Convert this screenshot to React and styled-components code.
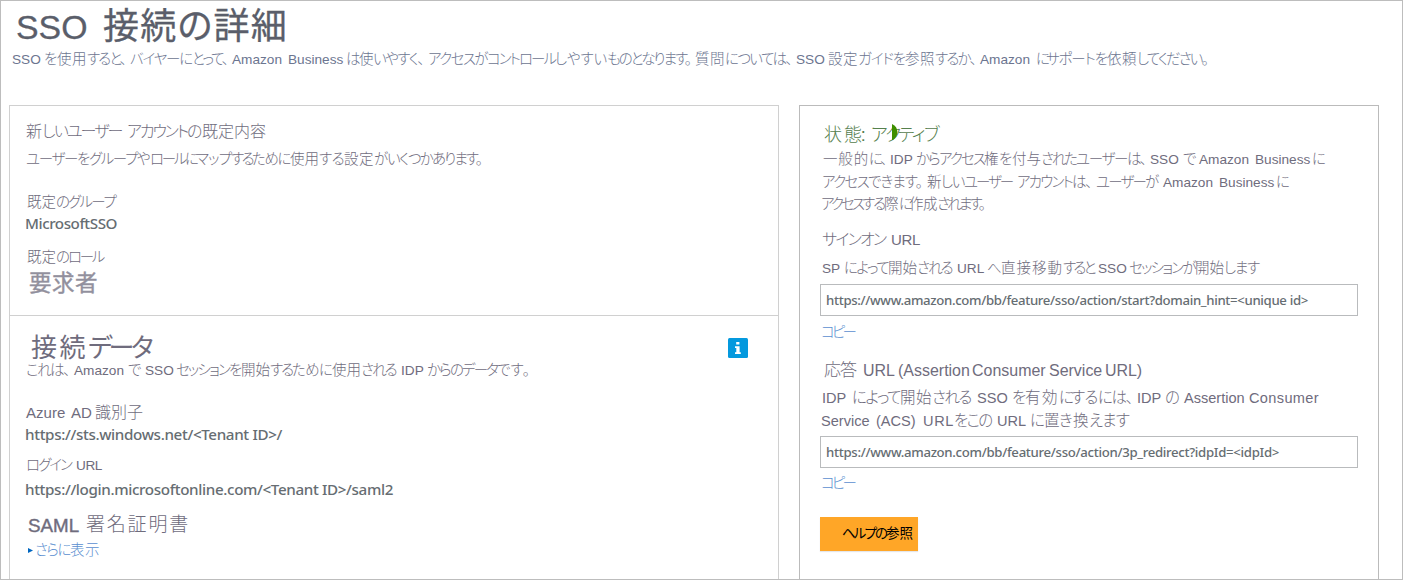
import React, { useLayoutEffect, useRef, useState } from "react";
import styled, { createGlobalStyle } from "styled-components";

const GlobalStyle = createGlobalStyle`
  * { box-sizing: border-box; }
  body {
    margin: 0;
    background: #fff;
    font-family: "Liberation Sans", "Noto Sans CJK JP", sans-serif;
    font-weight: 300;
    color: #6f6c7d;
  }
`;

const Page = styled.div`
  width: 1403px;
  height: 580px;
  overflow: hidden;
  display: flex;
  flex-direction: column;
  border: 1px solid #bdbdbd;
`;

const Header = styled.header`
  flex: none;
  height: 104px;
  padding-top: 2px;
`;

const Columns = styled.main`
  display: flex;
  gap: 20px;
  padding-left: 8px;
  flex: 1;
`;

const Card = styled.section`
  width: ${(p) => p.$width}px;
  height: 475px;
  border: 1px solid ${(p) => p.$border};
  border-bottom: 0;
`;

const CardSection = styled.div`
  padding: ${(p) => p.$top}px 0 0 15px;
  height: ${(p) => (p.$height ? `${p.$height}px` : "auto")};
  border-bottom: ${(p) => (p.$divided ? "1px solid #d0d0d0" : "0")};
`;

const Line = styled.div`
  display: flex;
  align-items: center;
  height: ${(p) => p.$height || 22}px;
  margin: ${(p) => p.$gap || 0}px 0 0;
  padding-top: ${(p) => p.$drop || 0}px;
  padding-left: ${(p) => p.$indent || 0}px;
  font-size: ${(p) => p.$size || 14.5}px;
  line-height: ${(p) => (p.$height || 22) - (p.$drop || 0)}px;
  color: ${(p) => p.$color || "inherit"};
  font-weight: ${(p) => p.$weight || 300};
  -webkit-text-stroke: ${(p) => p.$stroke || 0}px currentColor;
`;

const Slot = styled.span`
  flex: none;
  width: ${(p) => p.$width}px;
  white-space: pre;
  font-feature-settings: "palt";
`;

const Glyphs = styled.span`
  font-size: ${(p) => (p.$latin ? "0.94em" : "1em")};
`;

const Ember = styled.span`
  display: inline-block;
  margin-bottom: ${(p) => p.$lift || 0}px;
  font-family: "Noto Sans", "Open Sans", sans-serif;
  font-weight: 500;
  font-size: ${(p) => p.$size}px;
  color: #666d72;
`;

const UrlBox = styled.div`
  width: 538px;
  height: 32px;
  margin: ${(p) => p.$gap}px 0 0 5px;
  padding-left: 5px;
  display: flex;
  align-items: center;
  border: 1px solid #b9bbbd;
  white-space: pre;
`;

const CopyLink = styled(Line)`
  color: #5b8fd0;
`;

const TitleRow = styled.div`
  display: flex;
  justify-content: space-between;
  padding-right: 30px;
`;

const InfoBadge = styled.svg`
  width: 20px;
  height: 20px;
  margin-top: 7px;
`;

const Triangle = styled.svg`
  width: 5px;
  height: 5px;
  margin-right: 2px;
`;

const StatusWord = styled.div`
  position: relative;
`;

const Leaf = styled.svg`
  position: absolute;
  left: 76px;
  top: 2px;
  width: 7px;
  height: 18px;
`;

const HelpButton = styled.button`
  display: block;
  width: 98px;
  height: 34px;
  margin: 25px 0 0 5px;
  padding: 0 0 2px 22px;
  border: 0;
  background: #ffa627;
  box-shadow: 0 1px 1px #e4e6ea;
  color: #111;
  font-family: "Liberation Sans", "Noto Sans CJK JP", sans-serif;
  text-align: left;
`;

// Spreads a run over the given width: through its spaces for Latin words,
// through its letters otherwise.
function Run({ text, width, plain }) {
  const ref = useRef(null);
  const [style, setStyle] = useState({});
  const latin = !plain && /^[A-Za-z(]/.test(text) && !/[^\x00-\x7f]/.test(text);
  useLayoutEffect(() => {
    const natural = ref.current.getBoundingClientRect().width;
    if (latin && text.endsWith(" ")) {
      setStyle({ wordSpacing: `${width - natural}px` });
      return;
    }
    const reserve = /[、。]$/.test(text) ? 5 : text.endsWith(" ") ? 3 : 0;
    setStyle({ letterSpacing: `${(width - reserve - natural) / Array.from(text).length}px` });
  }, [text, width, latin]);
  return (
    <Slot $width={width}>
      <Glyphs ref={ref} $latin={latin} style={style}>{text}</Glyphs>
    </Slot>
  );
}

const Runs = ({ items }) => items.map(([text, width], i) => <Run key={i} text={text} width={width} />);

const EmberRun = ({ text, width, size = 15.2, lift = 2 }) => (
  <Ember $size={size} $lift={lift}><Run plain text={text} width={width} /></Ember>
);

export default function App() {
  return (
    <>
      <GlobalStyle />
      <Page>
        <Header>
          <Line as="h1" $height={44} $drop={4} $size={36} $indent={15} $color="#5a5e6a" $stroke={0.3} $weight={400}>
            <Runs items={[["SSO ", 87], ["接続の詳細", 185]]} />
          </Line>
          <Line $height={22} $gap={1} $indent={11} $color="#6c7590">
            <Runs items={[
              ["SSO ", 32], ["を", 13], ["使用", 30], ["すると、", 43], ["バイヤーに", 62], ["とって、", 40],
              ["Amazon ", 56], ["Business ", 58], ["は", 13], ["使", 14], ["いやすく、", 55], ["アクセスが", 59],
              ["コントロール", 68], ["しやすい", 52], ["ものとなります。", 88], ["質問", 30], ["については、", 71],
              ["SSO ", 32], ["設定", 30], ["ガイドを", 47], ["参照", 30], ["するか、", 45], ["Amazon ", 56],
              ["に", 10], ["サポートを", 61], ["依頼", 30], ["してください。", 75],
            ]} />
          </Line>
        </Header>
        <Columns>
          <Card $width={770} $border="#d0d0d0">
            <CardSection $top={13} $height={210} $divided>
              <Line $height={24} $drop={2} $size={16} $indent={1}>
                <Runs items={[["新", 16], ["しい", 25], ["ユーザー ", 60], ["アカウント", 60], ["の", 15], ["既定内容", 64]]} />
              </Line>
              <Line $height={24} $gap={4} $indent={1}>
                <Runs items={[
                  ["ユーザー", 51], ["を", 12], ["グループ", 48], ["や", 13], ["ロール", 35], ["に", 11], ["マップ", 35],
                  ["する", 21], ["ために", 38], ["使用", 29], ["する", 25], ["設定", 30], ["がいく", 34], ["つかあります。", 78],
                ]} />
              </Line>
              <Line $gap={20} $indent={2}>
                <Runs items={[["既定", 29], ["の", 12], ["グループ", 47]]} />
              </Line>
              <Line><EmberRun text="MicrosoftSSO" width={92} /></Line>
              <Line $gap={11} $indent={2}>
                <Runs items={[["既定", 29], ["の", 12], ["ロール", 35]]} />
              </Line>
              <Line $height={28} $drop={2} $gap={1} $indent={4} $size={22.5} $color="#92909d" $weight={400} $stroke={0.4}>
                <Runs items={[["要求者", 69]]} />
              </Line>
            </CardSection>
            <CardSection $top={15}>
              <TitleRow>
                <Line $height={32} $drop={2} $size={26} $indent={6} $weight={400}>
                  <Runs items={[["接続", 57], ["データ", 62]]} />
                </Line>
                <InfoBadge viewBox="0 0 20 20">
                  <rect width="20" height="20" rx="1.5" fill="#0499de" />
                  <path d="M8.2 4h3.2v2.6H8.2zM7 8.2h4.6v6h1.2v1.7H7v-1.7h1.3V9.9H7z" fill="#fff" />
                </InfoBadge>
              </TitleRow>
              <Line $height={14} $indent={1}>
                <Runs items={[
                  ["これ", 24], ["は、", 24], ["Amazon ", 54], ["で ", 17], ["SSO ", 31], ["セッション", 53], ["を", 12],
                  ["開始", 29], ["する", 22], ["ために", 40], ["使用", 29], ["される ", 40], ["IDP ", 26],
                  ["からの", 35], ["データ", 35], ["です。", 38],
                ]} />
              </Line>
              <Line $gap={24} $drop={2} $size={16} $indent={1}>
                <Runs items={[["Azure ", 45], ["AD ", 24], ["識別子", 48]]} />
              </Line>
              <Line $gap={1}><EmberRun text="https://sts.windows.net/<Tenant ID>/" width={257} /></Line>
              <Line $gap={8} $indent={1}>
                <Runs items={[["ログイン ", 50], ["URL", 26]]} />
              </Line>
              <Line $gap={3}><EmberRun text="https://login.microsoftonline.com/<Tenant ID>/saml2" width={368} /></Line>
              <Line $height={26} $drop={2} $gap={10} $size={19} $indent={3}>
                <Line as="span" $height={24} $size={20} $stroke={0.4}><Run text="SAML " width={58} /></Line>
                <Runs items={[["署名証明書", 104]]} />
              </Line>
              <Line $height={20} $gap={3} $indent={3} $color="#5b8fd0">
                <Triangle viewBox="0 0 5 5"><path d="M0 0L5 2.5L0 5z" fill="#0066c0" /></Triangle>
                <Runs items={[["さらに", 35], ["表示", 30]]} />
              </Line>
            </CardSection>
          </Card>
          <Card $width={580} $border="#bbb">
            <CardSection $top={15}>
              <StatusWord>
                <Line $height={26} $drop={2} $size={18} $indent={9} $color="#55804d">
                  <Runs items={[["状", 20], ["態: ", 27], ["ア", 14], ["ク", 13], ["ティブ", 40]]} />
                </Line>
                <Leaf viewBox="0 0 7 18">
                  <path d="M1 1C8 4 8 13 2 17L1 17z" fill="#3d8f00" />
                </Leaf>
              </StatusWord>
              <Line $gap={1} $indent={8}>
                <Runs items={[
                  ["一般的", 46], ["に、", 21], ["IDP ", 26], ["から", 23], ["アクセス", 45], ["権", 15], ["を", 13],
                  ["付与", 29], ["された", 35], ["ユーザー", 51], ["は、", 23], ["SSO ", 33], ["で ", 16],
                  ["Amazon ", 56], ["Business ", 57], ["に", 10],
                ]} />
              </Line>
              <Line $gap={1} $indent={7}>
                <Runs items={[
                  ["アクセス", 46], ["できます。", 59], ["新", 14], ["しい", 23], ["ユーザー ", 53], ["アカウント", 55],
                  ["は、", 24], ["ユーザー", 49], ["が ", 18], ["Amazon ", 56], ["Business ", 57], ["に", 10],
                ]} />
              </Line>
              <Line $indent={6}>
                <Runs items={[["アクセス", 41], ["する", 22], ["際", 15], ["に", 10], ["作成", 28], ["されます。", 51]]} />
              </Line>
              <Line $height={24} $drop={2} $gap={12} $indent={7} $size={16}>
                <Runs items={[["サインオン ", 69], ["URL", 29]]} />
              </Line>
              <Line $gap={6} $indent={7}>
                <Runs items={[
                  ["SP ", 22], ["によって", 44], ["開始", 29], ["される ", 40], ["URL ", 30], ["へ", 14],
                  ["直接移動", 62], ["すると ", 35], ["SSO ", 31], ["セッションが", 66], ["開始", 29], ["します", 35],
                ]} />
              </Line>
              <UrlBox $gap={5}>
                <EmberRun size={13.2} lift={0} text="https://www.amazon.com/bb/feature/sso/action/start?domain_hint=<unique id>" width={482} />
              </UrlBox>
              <CopyLink $height={20} $drop={2} $gap={5} $indent={6}><Run text="コピー" width={33} /></CopyLink>
              <Line $height={26} $drop={2} $gap={16} $indent={9} $size={17}>
                <Runs items={[["応答 ", 39], ["URL ", 35], ["(Assertion ", 74], ["Consumer ", 77], ["Service ", 56], ["URL)", 37]]} />
              </Line>
              <Line $height={24} $gap={3} $indent={7} $size={15.5}>
                <Runs items={[
                  ["IDP ", 30], ["によって", 48], ["開始", 32], ["される ", 45], ["SSO ", 35], ["を", 13], ["有効", 34],
                  ["に", 12], ["する", 27], ["には、", 39], ["IDP ", 28], ["の ", 19], ["Assertion ", 65], ["Consumer", 70],
                ]} />
              </Line>
              <Line $indent={6} $size={15.5}>
                <Runs items={[
                  ["Service ", 55], ["(ACS) ", 47], ["URL", 31], ["をこの ", 43], ["URL ", 33], ["に", 14],
                  ["置", 15], ["き", 14], ["換", 16], ["えます", 40],
                ]} />
              </Line>
              <UrlBox $gap={4}>
                <EmberRun size={13.2} lift={0} text="https://www.amazon.com/bb/feature/sso/action/3p_redirect?idpId=<idpId>" width={453} />
              </UrlBox>
              <CopyLink $height={20} $drop={2} $gap={4} $indent={6}><Run text="コピー" width={33} /></CopyLink>
              <HelpButton>
                <Line as="span" $height={31} $size={13.5} $color="#000" $weight={400}>
                  <Runs items={[["ヘルプの", 44], ["参照", 27]]} />
                </Line>
              </HelpButton>
            </CardSection>
          </Card>
        </Columns>
      </Page>
    </>
  );
}
